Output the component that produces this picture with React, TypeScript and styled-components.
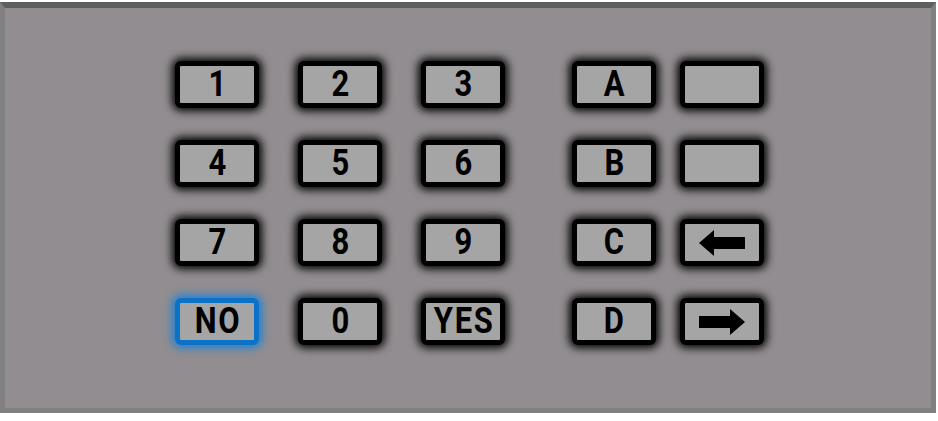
import {FC, ReactNode} from "react";
import styled, {createGlobalStyle} from "styled-components";

const GlobalStyle = createGlobalStyle`
  body {
    margin: 0;
    background: #ffffff;
    font-family: Roboto, "Liberation Sans", sans-serif;
  }
`;

const Page = styled.div`
  padding-top: 2px;
`;

const Panel = styled.div`
  box-sizing: border-box;
  width: 936px;
  height: 411px;
  background: #928d90;
  border: 5px solid #808080;
  border-top: 6px solid #5f5f5f;
  padding: 53px 0 0 170px;
  display: flex;
  align-items: flex-start;
`;

const Grid = styled.div<{$cols: number; $colGap: number}>`
  display: grid;
  grid-template-columns: repeat(${(p) => p.$cols}, 84px);
  grid-auto-rows: 47px;
  column-gap: ${(p) => p.$colGap}px;
  row-gap: 32px;
`;

const Spacer = styled.div`
  width: 67px;
  flex: none;
`;

const Key = styled.button<{$focused?: boolean}>`
  box-sizing: border-box;
  width: 84px;
  height: 47px;
  margin: 0;
  padding: 0;
  background: #a5a5a5;
  border: 5px solid ${(p) => (p.$focused ? "#0b72c8" : "#000")};
  border-radius: 6px;
  box-shadow: 0 0 8px 3px ${(p) => (p.$focused ? "rgba(18, 128, 222, 0.9)" : "#000")};
  color: #000;
  font-family: Roboto, "Liberation Sans", sans-serif;
  font-weight: 700;
  font-size: 36px;
  line-height: 37px;
  display: flex;
  align-items: center;
  justify-content: center;
  cursor: pointer;
  outline: none;
`;

// Roboto narrowed and spaced out to read like a mono key cap
const Label = styled.span`
  display: inline-block;
  transform: scaleX(0.86);
  letter-spacing: 2px;
  padding-left: 2px;
  white-space: nowrap;
`;

const Arrow: FC<{dir: "left" | "right"}> = ({dir}) => (
  <svg width="46" height="26" viewBox="0 0 46 26"
       style={{transform: dir === "right" ? "scaleX(-1)" : undefined}}>
    <polygon points="0,13 15,0 15,26" fill="#000" />
    <rect x="14" y="7" width="32" height="12" fill="#000" />
  </svg>
);

const numberKeys: {label: string; focused?: boolean}[] = [
  {label: "1"}, {label: "2"}, {label: "3"},
  {label: "4"}, {label: "5"}, {label: "6"},
  {label: "7"}, {label: "8"}, {label: "9"},
  {label: "NO", focused: true}, {label: "0"}, {label: "YES"},
];

const sideKeys: ReactNode[] = [
  <Label>A</Label>, null,
  <Label>B</Label>, null,
  <Label>C</Label>, <Arrow dir="left" />,
  <Label>D</Label>, <Arrow dir="right" />,
];

const App: FC = () => {
  return (
    <Page>
      <GlobalStyle />
      <Panel>
        <Grid $cols={3} $colGap={39}>
          {numberKeys.map((k, i) => (
            <Key key={i} $focused={k.focused}><Label>{k.label}</Label></Key>
          ))}
        </Grid>
        <Spacer />
        <Grid $cols={2} $colGap={24}>
          {sideKeys.map((k, i) => (
            <Key key={i}>{k}</Key>
          ))}
        </Grid>
      </Panel>
    </Page>
  );
};

export default App;
